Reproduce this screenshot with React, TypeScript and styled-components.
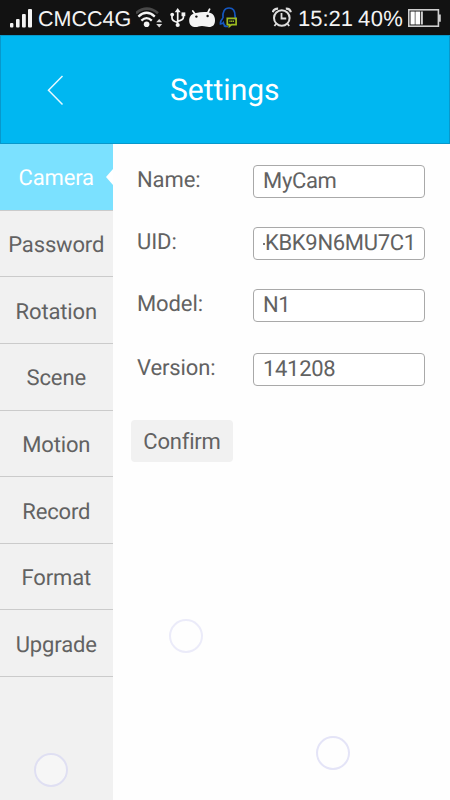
import React from "react";
import styled, { createGlobalStyle } from "styled-components";

const GlobalStyle = createGlobalStyle`
  * { box-sizing: border-box; }
  body { margin: 0; background: #fefefe; }
`;

const Screen = styled.div`
  position: relative;
  display: flex;
  flex-direction: column;
  width: 450px;
  height: 800px;
  overflow: hidden;
  background: #fefefe;
  color: #626262;
  font-family: Roboto, "Noto Sans", sans-serif;
  text-rendering: geometricPrecision;
`;

const StatusBar = styled.header`
  display: flex;
  justify-content: space-between;
  flex: none;
  height: 35px;
  padding: 0 8px 0 10px;
  background: #121212;
  color: #f4f4f4;
  font-family: "Liberation Sans", Arial, sans-serif;
`;

const StatusGroup = styled.div`
  display: flex;
  align-items: flex-start;
  svg { display: block; flex: none; }
`;

const StatusText = styled.span<{ $width: number; $size?: number; $top?: number; $spacing?: number }>`
  width: ${(p) => p.$width}px;
  padding-top: ${(p) => p.$top ?? 1}px;
  font-size: ${(p) => p.$size ?? 22}px;
  letter-spacing: ${(p) => p.$spacing ?? 0}px;
  line-height: 35px;
  white-space: nowrap;
`;

const TitleBar = styled.div`
  display: flex;
  align-items: center;
  flex: none;
  height: 109px;
  padding-left: 46px;
  background: #00b7f1;
  border: 1px solid #0898cb;
`;

const BackButton = styled.button`
  display: flex;
  width: 20px;
  height: 34px;
  padding: 0;
  border: 0;
  background: none;
`;

const Title = styled.h1`
  margin: 3px 0 0 103px;
  color: #fff;
  font-size: 30px;
  font-weight: 400;
  line-height: 40px;
`;

const Body = styled.div`
  display: flex;
  flex: 1;
`;

const Sidebar = styled.nav`
  flex: none;
  width: 112.5px;
  background: #f1f1f1;
`;

const Tab = styled.div<{ $active?: boolean }>`
  position: relative;
  height: 66.65px;
  padding-top: 2.4px;
  border-bottom: 1px solid #cbcbcb;
  background: ${(p) => (p.$active ? "#7be1ff" : "transparent")};
  color: ${(p) => (p.$active ? "#fff" : "inherit")};
  font-size: 22px;
  line-height: 66px;
  letter-spacing: -0.15px;
  text-align: center;
`;

const Pointer = styled.span`
  position: absolute;
  top: 25px;
  right: 0;
  border: solid transparent;
  border-width: 8.5px 7.5px 8.5px 0;
  border-right-color: #fff;
`;

const Form = styled.main`
  flex: 1;
  padding: 17px 25px 0 24.5px;
`;

const Row = styled.div<{ $height: number }>`
  display: flex;
  justify-content: space-between;
  height: ${(p) => p.$height}px;
`;

const Label = styled.label`
  padding-top: 2px;
  font-size: 22px;
  line-height: 36px;
  letter-spacing: -0.1px;
`;

const Field = styled.div`
  width: 172px;
  height: 33px;
  margin-top: 4px;
  padding-left: 9px;
  border: 1.5px solid #a9a9a9;
  border-radius: 4px;
  background: #fff;
  font-size: 22px;
  line-height: 32px;
  letter-spacing: -0.32px;
  white-space: nowrap;
`;

const LeadingMark = styled.span`
  display: inline-block;
  width: 1.5px;
  height: 2px;
  margin-right: 0.5px;
  vertical-align: 5px;
  background: #777;
`;

const Confirm = styled.button`
  display: block;
  width: 102px;
  height: 42px;
  margin: 7px 0 0 -6px;
  padding: 0;
  border: 0;
  border-radius: 4px;
  background: #f1f1f1;
  color: inherit;
  font: inherit;
  font-size: 22px;
  letter-spacing: -0.2px;
`;

const Bubble = styled.span<{ $x: number; $y: number; $alpha: number }>`
  position: absolute;
  left: ${(p) => p.$x - 17}px;
  top: ${(p) => p.$y - 17}px;
  width: 34px;
  height: 34px;
  border: 2px solid rgba(190, 190, 235, ${(p) => p.$alpha});
  border-radius: 50%;
  background: rgba(255, 255, 255, 0.4);
`;

const SignalIcon = () => (
  <svg width="28" height="35" viewBox="0 0 28 35" fill="#f4f4f4">
    <rect x="0" y="23" width="3.4" height="4.5" rx="1" />
    <rect x="6" y="19" width="3.6" height="8.5" rx="1" />
    <rect x="12" y="14" width="3.8" height="13.5" rx="1" />
    <rect x="18" y="9" width="4" height="18.5" rx="1" />
  </svg>
);

const WifiIcon = () => (
  <svg width="33" height="35" viewBox="0 0 33 35" fill="none">
    <path d="M0 13.2Q10.8 4.2 22 13.2" stroke="#484848" strokeWidth="2.6" />
    <path d="M2.4 16.6Q10.6 9 18.8 16.6" stroke="#f4f4f4" strokeWidth="2.3" />
    <path d="M5.4 20.6Q10.6 15.6 15.8 20.6" stroke="#f4f4f4" strokeWidth="2.3" />
    <circle cx="10.6" cy="24.3" r="2.8" fill="#f4f4f4" />
    <path d="M20.2 22.3l3-3.4 3 3.4zM20.2 24.1l3 3.4 3-3.4z" fill="#d8d8d8" />
  </svg>
);

const UsbIcon = () => (
  <svg width="19" height="35" viewBox="0 0 19 35" fill="none" stroke="#f4f4f4" strokeWidth="1.7">
    <path d="M8.7 11v14M3 15v3q0 3 5.7 4.4M14.4 14v3.6q0 2.4-5.7 3.8" />
    <path d="M5.7 12.2l3-4.2 3 4.2z" fill="#f4f4f4" stroke="none" />
    <circle cx="3.2" cy="14.6" r="1.9" fill="#f4f4f4" stroke="none" />
    <rect x="12.5" y="12.4" width="3.8" height="3.8" fill="#f4f4f4" stroke="none" />
    <circle cx="8.7" cy="25" r="2.1" fill="#f4f4f4" stroke="none" />
  </svg>
);

const RobotIcon = () => (
  <svg width="31" height="35" viewBox="0 0 31 35">
    <path d="M4.8 11l2.4 3.2M21.6 9.2l-2 4" stroke="#f4f4f4" strokeWidth="1.8" strokeLinecap="round" />
    <path d="M1.2 21C1 16 4 13.6 8 13c4-1 9-1.4 13-.6 4.2.9 6.2 4 6 8 0 4.400-2.200 6.500-6 6.500-2.500 0-4-1-7-1s-4 1.200-6.500 1.200C4 27.100 1.400 25 1.200 21z" fill="#f4f4f4" />
    <circle cx="8.400" cy="16.600" r="1.200" fill="#121212" />
    <circle cx="19.600" cy="16" r="1.200" fill="#121212" />
  </svg>
);

const ChatIcon = () => (
  <svg width="20" height="35" viewBox="0 0 20 35" fill="none">
    <path d="M4 18q-.8-9.7 6-10 6.2-.1 6 8l.7 4M4 18q-3 3-2.5 6 2-.2 2.8-1.3.4 1.8 1.4 2.6-1 .8.5 1.2H9" stroke="#1557c0" strokeWidth="1.7" />
    <path d="M8.300 18.300h8.800v6.300h-4.500l-2.200 1.800v-1.800H8.300z" stroke="#9dbb20" strokeWidth="1.7" />
    <path d="M10.400 21.300h4.800" stroke="#9dbb20" strokeWidth="1.5" strokeDasharray="1.2 .5" />
  </svg>
);

const AlarmIcon = () => (
  <svg width="26" height="35" viewBox="0 0 26 35" fill="none" stroke="#dedede">
    <circle cx="9.800" cy="18" r="7.800" strokeWidth="2" />
    <path d="M9.500 13v5.500h4.700" strokeWidth="1.8" />
    <path d="M.8 12.200q1-3.700 5.300-3.600M13.800 8.600q4.300-.1 5 3.600" strokeWidth="2.2" />
    <path d="M4 24l-1.600 2M15.600 24l1.600 2" strokeWidth="1.8" />
  </svg>
);

const BatteryIcon = () => (
  <svg width="34" height="35" viewBox="0 0 34 35">
    <rect x=".8" y="9.800" width="29.600" height="16.400" fill="none" stroke="#cfcfcf" strokeWidth="1.6" />
    <path d="M31 14.500h1.800v7.200H31z" fill="#cfcfcf" />
    <path d="M2.500 11.500h4.300v13H2.500zM7.400 11.500h4.800v13H7.400zM13.200 11.500h1.500v13h-1.500z" fill="#fff" />
  </svg>
);

const tabs = ["Camera", "Password", "Rotation", "Scene", "Motion", "Record", "Format", "Upgrade"];

const fields = [
  { label: "Name:", value: "MyCam", height: 62 },
  { label: "UID:", value: "KBK9N6MU7C1", height: 62, scrolled: true },
  { label: "Model:", value: "N1", height: 64 },
  { label: "Version:", value: "141208", height: 64 },
];

const bubbles = [
  { x: 186, y: 636, alpha: 0.3 },
  { x: 333, y: 753, alpha: 0.42 },
  { x: 51, y: 770, alpha: 0.42 },
];

export default function App() {
  return (
    <>
      <GlobalStyle />
      <Screen>
        <StatusBar>
          <StatusGroup>
            <SignalIcon />
            <StatusText $width={98} $size={21.5} $top={2}>CMCC4G</StatusText>
            <WifiIcon />
            <UsbIcon />
            <RobotIcon />
            <ChatIcon />
          </StatusGroup>
          <StatusGroup>
            <AlarmIcon />
            <StatusText $width={60}>15:21</StatusText>
            <StatusText $width={50} $spacing={0.4}>40%</StatusText>
            <BatteryIcon />
          </StatusGroup>
        </StatusBar>
        <TitleBar>
          <BackButton aria-label="Back">
            <svg width="20" height="34" viewBox="0 0 20 34" fill="none" stroke="#e4f8ff" strokeWidth="1.5">
              <path d="M15.500 3L1.500 17.200 15.500 31.500" />
            </svg>
          </BackButton>
          <Title>Settings</Title>
        </TitleBar>
        <Body>
          <Sidebar>
            {tabs.map((name, i) => (
              <Tab key={name} $active={i === 0}>
                {name}
                {i === 0 && <Pointer />}
              </Tab>
            ))}
          </Sidebar>
          <Form>
            {fields.map((f) => (
              <Row key={f.label} $height={f.height}>
                <Label>{f.label}</Label>
                <Field>
                  {f.scrolled && <LeadingMark />}
                  {f.value}
                </Field>
              </Row>
            ))}
            <Confirm>Confirm</Confirm>
          </Form>
        </Body>
        {bubbles.map((b) => (
          <Bubble key={b.x} $x={b.x} $y={b.y} $alpha={b.alpha} />
        ))}
      </Screen>
    </>
  );
}
